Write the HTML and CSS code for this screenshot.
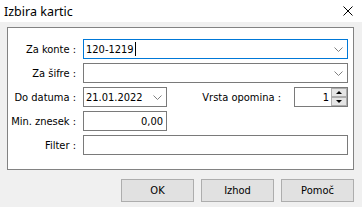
FILE: index.html
```html
<!DOCTYPE html>
<html lang="sl">
  <head>
    <meta charset="UTF-8" />
    <meta name="viewport" content="width=device-width, initial-scale=1.0" />
    <title>Izbira kartic</title>
    <link rel="stylesheet" href="styles.css">
  </head>
  <body>
    <div class="titlebar">
      <span class="title">Izbira kartic</span>
      <svg class="close" width="10" height="10" viewBox="0 0 10 10">
        <path d="M0.5 0.5 L9.5 9.5 M9.5 0.5 L0.5 9.5" stroke="#000" stroke-width="1" fill="none" />
      </svg>
    </div>

    <div class="content">
      <div class="panel">
        <span class="lbl">Za konte :</span>
        <div class="field combo focused">
          <span class="val">120-1219<span class="caret"></span></span>
          <svg class="chev" width="9" height="5" viewBox="0 0 9 5"><polyline points="0.5,0.5 4.5,4.5 8.5,0.5" /></svg>
        </div>

        <span class="lbl">Za šifre :</span>
        <div class="field combo">
          <span class="val"></span>
          <svg class="chev" width="9" height="5" viewBox="0 0 9 5"><polyline points="0.5,0.5 4.5,4.5 8.5,0.5" /></svg>
        </div>

        <span class="lbl">Do datuma :</span>
        <div class="row">
          <div class="field combo short">
            <span class="val">21.01.2022</span>
            <svg class="chev" width="9" height="5" viewBox="0 0 9 5"><polyline points="0.5,0.5 4.5,4.5 8.5,0.5" /></svg>
          </div>
          <span class="lbl mid">Vrsta opomina :</span>
          <div class="field spin">
            <span class="val num">1</span>
            <div class="spin-btns">
              <div class="spin-btn"><span class="tri up"></span></div>
              <div class="spin-btn"><span class="tri down"></span></div>
            </div>
          </div>
        </div>

        <span class="lbl">Min. znesek :</span>
        <div class="row">
          <div class="field short">
            <span class="val num">0,00</span>
          </div>
        </div>

        <span class="lbl">Filter :</span>
        <div class="field"></div>
      </div>

      <div class="buttons">
        <div class="btn">OK</div>
        <div class="btn">Izhod</div>
        <div class="btn">Pomoč</div>
      </div>
    </div>
  </body>
</html>
```

FILE: styles.css
```css
body {
  margin: 0;
  width: 362px;
  height: 207px;
  overflow: hidden;
  background-color: #f0f0f0;
  font-family: "DejaVu Sans Condensed", "Liberation Sans", sans-serif;
  font-size: 11px;
  color: #000;
}

.titlebar {
  display: flex;
  justify-content: space-between;
  align-items: center;
  height: 22px;
  padding: 0 9px 0 4px;
  background-color: #fff;
}

.title {
  font-family: "Noto Sans", "Liberation Sans", sans-serif;
  font-size: 12.5px;
  margin-top: 1px;
}

.close {
  display: block;
  margin-bottom: 1px;
}

.content {
  padding: 5px 8px 0 7px;
}

.panel {
  display: grid;
  grid-template-columns: 68px 1fr;
  grid-auto-rows: 20px;
  column-gap: 7px;
  row-gap: 4px;
  padding: 11px 5px 14px 0;
  border: 1px solid #828282;
  background-color: #fff;
}

.lbl {
  display: flex;
  align-items: center;
  justify-content: flex-end;
  white-space: nowrap;
}

.lbl.mid {
  flex: 1;
  padding-right: 13px;
}

.row {
  display: flex;
  align-items: stretch;
}

.field {
  display: flex;
  align-items: center;
  box-sizing: border-box;
  height: 20px;
  border: 1px solid #7a7a7a;
  background-color: #fff;
}

.field.focused {
  border-color: #0078d7;
}

.field.short {
  width: 84px;
}

.val {
  flex: 1;
  display: flex;
  align-items: center;
  padding: 0 3px 0 2px;
  white-space: nowrap;
}

.val.num {
  justify-content: flex-end;
}

.caret {
  display: inline-block;
  width: 1px;
  height: 14px;
  margin-left: 1px;
  background-color: #000;
}

.chev {
  display: block;
  margin-right: 4px;
}

.chev polyline {
  fill: none;
  stroke: #808080;
  stroke-width: 1;
}

.field.spin {
  width: 54px;
}

.field.spin .val {
  padding-right: 2px;
}

.spin-btns {
  display: flex;
  flex-direction: column;
  align-self: stretch;
  width: 16px;
}

.spin-btn {
  flex: 1;
  display: flex;
  align-items: center;
  justify-content: center;
  box-sizing: border-box;
  border: 1px solid #adadad;
  background-color: #e5e5e5;
}

.tri {
  width: 0;
  height: 0;
  border-left: 3px solid transparent;
  border-right: 3px solid transparent;
}

.tri.up {
  border-bottom: 3px solid #000;
}

.tri.down {
  border-top: 3px solid #000;
}

.buttons {
  display: flex;
  justify-content: flex-end;
  gap: 7px;
  margin-top: 9px;
}

.btn {
  display: flex;
  align-items: center;
  justify-content: center;
  box-sizing: border-box;
  width: 73px;
  height: 23px;
  border: 1px solid #adadad;
  background-color: #e1e1e1;
}
```
